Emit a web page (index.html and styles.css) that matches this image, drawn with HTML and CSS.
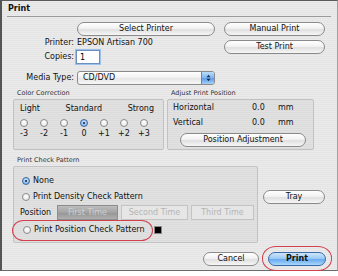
FILE: index.html
```html
<!DOCTYPE html>
<html lang="en">
<head>
<meta charset="UTF-8">
<title>Print</title>
<link rel="stylesheet" href="styles.css">
</head>
<body>

<div class="window">
  <div class="titlebar">Print</div>

  <div class="top">
    <div class="top-left">
      <span></span>
      <button class="aqua">Select Printer</button>
      <span class="lbl">Printer:</span>
      <span class="val">EPSON Artisan 700</span>
      <span class="lbl">Copies:</span>
      <span><input class="copies" type="text" value="1"></span>
      <span class="lbl media">Media Type:</span>
      <div class="select media">
        <span class="select-text">CD/DVD</span>
        <span class="select-arrows">
          <svg width="5" height="8" viewBox="0 0 5 8"><path d="M0.5 3.2 L2.5 0.8 L4.5 3.2Z M0.5 4.8 L2.5 7.2 L4.5 4.8Z" fill="#1b2f55"/></svg>
        </span>
      </div>
    </div>
    <div class="top-right">
      <button class="aqua">Manual Print</button>
      <button class="aqua">Test Print</button>
    </div>
  </div>

  <div class="middle">
    <div class="group color-group">
      <div class="legend">Color Correction</div>
      <div class="box">
        <div class="scale-head">
          <span>Light</span>
          <span>Standard</span>
          <span>Strong</span>
        </div>
        <div class="scale">
          <span class="radio"></span>
          <span class="radio"></span>
          <span class="radio"></span>
          <span class="radio on"></span>
          <span class="radio"></span>
          <span class="radio"></span>
          <span class="radio"></span>
          <span>-3</span>
          <span>-2</span>
          <span>-1</span>
          <span>0</span>
          <span>+1</span>
          <span>+2</span>
          <span>+3</span>
        </div>
      </div>
    </div>

    <div class="group adjust-group">
      <div class="legend">Adjust Print Position</div>
      <div class="box">
        <div class="adj-row">
          <span class="adj-name">Horizontal</span>
          <span class="adj-num">0.0</span>
          <span>mm</span>
        </div>
        <div class="adj-row">
          <span class="adj-name">Vertical</span>
          <span class="adj-num">0.0</span>
          <span>mm</span>
        </div>
        <button class="aqua pos-adjust">Position Adjustment</button>
      </div>
    </div>
  </div>

  <div class="bottom">
    <div class="group check-group">
      <div class="legend">Print Check Pattern</div>
      <div class="box">
        <div class="opt"><span class="radio on"></span>None</div>
        <div class="opt opt-density"><span class="radio"></span>Print Density Check Pattern</div>
        <div class="pos-row">
          <span class="pos-label">Position</span>
          <span class="seg seg-active first">First Time</span>
          <span class="seg second">Second Time</span>
          <span class="seg third">Third Time</span>
        </div>
        <div class="opt opt-position">
          <span class="radio"></span>Print Position Check Pattern
          <span class="swatch"></span>
          <span class="mark mark-option"></span>
        </div>
      </div>
    </div>
    <div class="side">
      <button class="aqua tray">Tray</button>
    </div>
  </div>

  <div class="footer">
    <button class="aqua cancel">Cancel</button>
    <div class="print-wrap">
      <button class="aqua default">Print</button>
      <span class="mark mark-print"></span>
    </div>
  </div>
</div>

</body>
</html>
```

FILE: styles.css
```css
body {
  margin: 0;
  padding: 0;
  background: #fff;
  font-family: "DejaVu Sans", "Noto Sans", sans-serif;
  font-size: 8px;
  color: #111;
}

.window {
  width: 338px;
  height: 271px;
  box-sizing: border-box;
  border-top: 1px solid #5a5a5a;
  border-left: 2px solid #555;
  border-bottom: 1px solid #6a6a6a;
  border-right: 1px solid #a0a0a0;
  background: repeating-linear-gradient(#ebebeb 0 1px, #e4e4e4 1px 2px);
}

.titlebar {
  height: 15px;
  line-height: 15px;
  margin: 0 6px 0 5px;
  padding-left: 1px;
  border-bottom: 1px solid #9a9a9a;
  font-weight: bold;
  font-size: 8px;
}

button.aqua {
  display: block;
  height: 14px;
  padding: 0;
  border: 1px solid #8a8a8a;
  border-radius: 7px;
  background: linear-gradient(#ffffff, #f2f2f2 45%, #e0e0e0 55%, #f6f6f6);
  font-family: inherit;
  font-size: 8px;
  line-height: 12px;
  color: #111;
  text-align: center;
}

button.default {
  border-color: #3c6aa8;
  background: linear-gradient(#cfe6fb, #9ccaf3 45%, #6aaaf0 55%, #a8d8fb);
  font-weight: bold;
}

/* top area */
.top {
  display: flex;
  margin-top: 5px;
}

.top-left {
  display: grid;
  grid-template-columns: 75px 138px;
  grid-template-rows: 14px 14px 14px 21px;
}

.top-left .lbl {
  text-align: right;
  padding-right: 3px;
  line-height: 14px;
}

.top-left .val {
  line-height: 14px;
}

.top-left .media {
  margin-top: 7px;
}

.copies {
  display: block;
  width: 24px;
  height: 14px;
  box-sizing: border-box;
  margin: 0 0 0 -1px;
  padding: 0 0 0 3px;
  border: 1px solid #6d8fc0;
  box-shadow: 0 0 0 1px #9cc0ec;
  font-family: inherit;
  font-size: 8px;
  background: #fff;
}

.select {
  display: flex;
  height: 14px;
  box-sizing: border-box;
  border: 1px solid #8a8a8a;
  border-radius: 3px;
  background: linear-gradient(#ffffff, #f0f0f0 50%, #e6e6e6 55%, #f8f8f8);
  overflow: hidden;
}

.select-text {
  flex: 1;
  padding-left: 5px;
  line-height: 12px;
}

.select-arrows {
  width: 12px;
  display: flex;
  align-items: center;
  justify-content: center;
  border-left: 1px solid #5c86c0;
  background: linear-gradient(#b9dcfa, #7fb4ee 50%, #5f9de8 55%, #a6d0f8);
}

.top-right {
  margin-left: 9px;
  width: 101px;
}

.top-right button {
  width: 101px;
  margin-bottom: 4px;
}

/* group boxes */
.legend {
  height: 10px;
  line-height: 10px;
  padding-left: 4px;
  font-size: 6.5px;
  color: #333;
}

.box {
  margin-top: 1px;
  box-sizing: border-box;
  border: 1px solid #c2c2c2;
  border-radius: 2px;
  background: rgba(0, 0, 0, 0.035);
}

.middle {
  display: flex;
  margin-top: 3px;
}

.color-group {
  margin-left: 11px;
  width: 151px;
}

.color-group .box {
  height: 51px;
  padding-top: 4px;
}

.scale-head {
  display: flex;
  justify-content: space-between;
  padding: 0 9px 0 6px;
  line-height: 10px;
}

.scale {
  display: grid;
  grid-template-columns: repeat(7, 20px);
  grid-template-rows: 8px 10px;
  row-gap: 2px;
  margin-top: 5px;
  justify-items: center;
  line-height: 10px;
}

.radio {
  display: inline-block;
  width: 8px;
  height: 8px;
  box-sizing: border-box;
  border: 1px solid #8c8c8c;
  border-radius: 50%;
  background: radial-gradient(circle at 50% 35%, #ffffff, #e2e2e2);
  position: relative;
}

.radio.on {
  border-color: #3a679f;
  background: radial-gradient(circle at 50% 35%, #cde6fd, #6ba7ea);
}

.radio.on::after {
  content: "";
  position: absolute;
  left: 2px;
  top: 2px;
  width: 2px;
  height: 2px;
  border-radius: 50%;
  background: #10203a;
}

.adjust-group {
  margin-left: 3px;
  width: 147px;
}

.adjust-group .box {
  height: 51px;
  padding: 3px 0 0 5px;
}

.adj-row {
  display: flex;
  line-height: 10px;
  margin-bottom: 5px;
}

.adj-name {
  width: 79px;
}

.adj-num {
  width: 26px;
}

.pos-adjust {
  width: 126px;
  margin-left: 7px;
}

/* check pattern */
.bottom {
  display: flex;
  margin-top: 5px;
}

.check-group {
  margin-left: 11px;
  width: 245px;
}

.check-group .box {
  height: 77px;
  padding: 9px 0 0 8px;
}

.opt {
  display: flex;
  align-items: center;
  height: 10px;
  line-height: 10px;
  position: relative;
}

.opt .radio {
  margin-right: 3px;
}

.opt-density {
  margin-top: 6px;
}

.pos-row {
  display: flex;
  align-items: center;
  margin: 3px 0 0 -2px;
  height: 15px;
}

.pos-label {
  width: 37px;
}

.seg {
  height: 15px;
  box-sizing: border-box;
  margin-right: 3px;
  border: 1px solid #c4c4c4;
  background: #e6e6e6;
  color: #b4b4b4;
  text-align: center;
  line-height: 13px;
}

.seg-active {
  border-color: #8e8e8e;
  background: linear-gradient(#bdbdbd, #a3a3a3 50%, #969696 55%, #b0b0b0);
  color: #cfcfcf;
}

.first { width: 61px; }
.second { width: 67px; }
.third { width: 63px; }

.opt-position {
  margin-top: 5px;
  padding-left: 1px;
}

.swatch {
  width: 8px;
  height: 8px;
  margin-left: 9px;
  box-sizing: border-box;
  border: 1px solid #888;
  background: #000;
}

.mark {
  position: absolute;
  border: 1.5px solid #d2404e;
  border-radius: 50%;
  pointer-events: none;
}

.mark-option {
  left: -10px;
  top: -5px;
  width: 139px;
  height: 19px;
  border-radius: 12px / 11px;
}

.side {
  margin-left: 5px;
  padding-top: 35px;
}

.tray {
  width: 62px;
}

/* footer */
.footer {
  display: flex;
  justify-content: flex-end;
  align-items: flex-start;
  margin-top: 9px;
  padding-right: 11px;
}

.cancel {
  width: 56px;
}

.print-wrap {
  position: relative;
  margin-left: 9px;
}

.print-wrap .default {
  width: 58px;
}

.mark-print {
  left: -6px;
  top: -6px;
  width: 68px;
  height: 23px;
  border-radius: 14px / 12px;
}
```
